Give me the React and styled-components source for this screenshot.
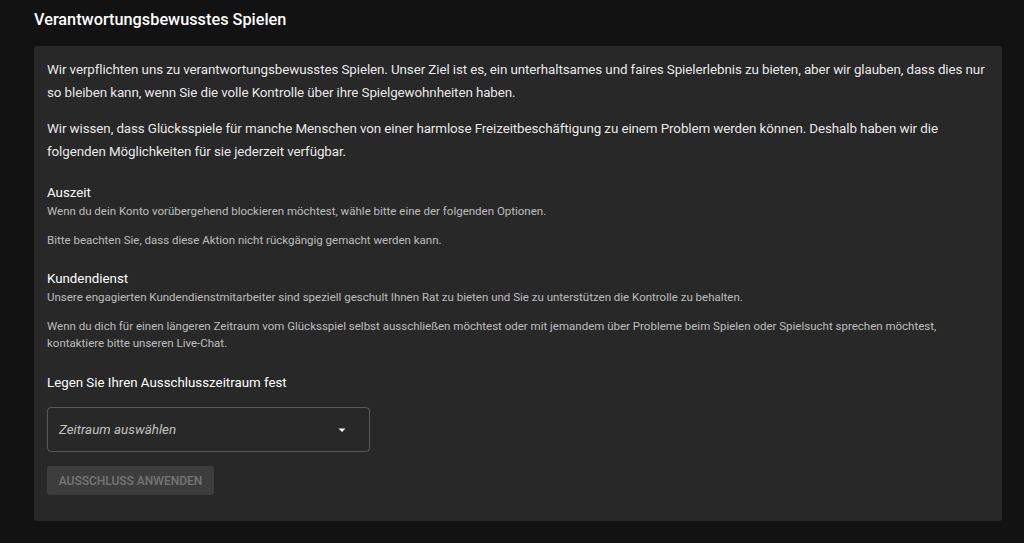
import React from "react";
import styled, { createGlobalStyle } from "styled-components";

const Global = createGlobalStyle`
  html, body { margin: 0; padding: 0; background: #121212; }
  body { font-family: Roboto, "Noto Sans", "Liberation Sans", sans-serif; color: #fff; }
  * { box-sizing: border-box; }
`;

const Page = styled.div`
  padding: 8px 22px 23px 34px;
  min-height: 543px;
`;

const Title = styled.h1`
  margin: 0 0 14px;
  font-size: 16.3px;
  font-weight: 500;
  line-height: 24px;
  color: #fff;
`;

const Card = styled.section`
  background: #282828;
  border-radius: 3px;
  padding: 13px 13px 26px;
  display: flex;
  flex-direction: column;
`;

const Lead = styled.p`
  margin: 0 0 14px;
  font-size: 13.4px;
  letter-spacing: -0.1px;
  line-height: 22.5px;
  color: rgba(255, 255, 255, 0.92);
`;

const Section = styled.div`
  margin-top: ${(p) => p.$top}px;
`;

const SectionTitle = styled.h3`
  margin: 0;
  font-size: 13.3px;
  font-weight: 400;
  line-height: 21px;
  color: #fff;
`;

const Note = styled.p`
  margin: 0 0 ${(p) => (p.$last ? 0 : 12)}px;
  font-size: 11.5px;
  line-height: 17px;
  color: rgba(255, 255, 255, 0.7);
`;

const FieldLabel = styled.div`
  margin-top: 20px;
  font-size: 13.3px;
  line-height: 21px;
  color: #fff;
`;

const Select = styled.div`
  margin-top: 14px;
  width: 323px;
  height: 45px;
  border: 1px solid rgba(255, 255, 255, 0.23);
  border-radius: 4px;
  display: flex;
  align-items: center;
  justify-content: space-between;
  padding: 0 15px 0 11px;
  cursor: pointer;
`;

const Placeholder = styled.span`
  font-size: 13.4px;
  font-style: italic;
  color: rgba(255, 255, 255, 0.72);
`;

const Arrow = styled.svg`
  width: 24px;
  height: 24px;
  fill: #fff;
`;

const Button = styled.button`
  margin-top: 14px;
  align-self: flex-start;
  width: 167px;
  height: 29px;
  border: none;
  border-radius: 3px;
  background: rgba(255, 255, 255, 0.1);
  color: rgba(255, 255, 255, 0.3);
  font-family: inherit;
  font-size: 12px;
  font-weight: 500;
  letter-spacing: 0;
  text-transform: uppercase;
  padding: 0;
`;

export default function App() {
  return (
    <>
      <Global />
      <Page>
        <Title>Verantwortungsbewusstes Spielen</Title>
        <Card>
          <Lead>
            Wir verpflichten uns zu verantwortungsbewusstes Spielen. Unser Ziel ist es, ein unterhaltsames und faires
            Spielerlebnis zu bieten, aber wir glauben, dass dies nur so bleiben kann, wenn Sie die volle Kontrolle über
            ihre Spielgewohnheiten haben.
          </Lead>
          <Lead>
            Wir wissen, dass Glücksspiele für manche Menschen von einer harmlose Freizeitbeschäftigung zu einem Problem
            werden können. Deshalb haben wir die folgenden Möglichkeiten für sie jederzeit verfügbar.
          </Lead>
          <Section $top={5}>
            <SectionTitle>Auszeit</SectionTitle>
            <Note>Wenn du dein Konto vorübergehend blockieren möchtest, wähle bitte eine der folgenden Optionen.</Note>
            <Note $last>Bitte beachten Sie, dass diese Aktion nicht rückgängig gemacht werden kann.</Note>
          </Section>
          <Section $top={19}>
            <SectionTitle>Kundendienst</SectionTitle>
            <Note>
              Unsere engagierten Kundendienstmitarbeiter sind speziell geschult Ihnen Rat zu bieten und Sie zu
              unterstützen die Kontrolle zu behalten.
            </Note>
            <Note $last>
              Wenn du dich für einen längeren Zeitraum vom Glücksspiel selbst ausschließen möchtest oder mit jemandem
              über Probleme beim Spielen oder Spielsucht sprechen möchtest, kontaktiere bitte unseren Live-Chat.
            </Note>
          </Section>
          <FieldLabel>Legen Sie Ihren Ausschlusszeitraum fest</FieldLabel>
          <Select>
            <Placeholder>Zeitraum auswählen</Placeholder>
            <Arrow viewBox="0 0 24 24">
              <path d="M8.5 10.5l3.5 3.5 3.5-3.5z" />
            </Arrow>
          </Select>
          <Button disabled>Ausschluss anwenden</Button>
        </Card>
      </Page>
    </>
  );
}
